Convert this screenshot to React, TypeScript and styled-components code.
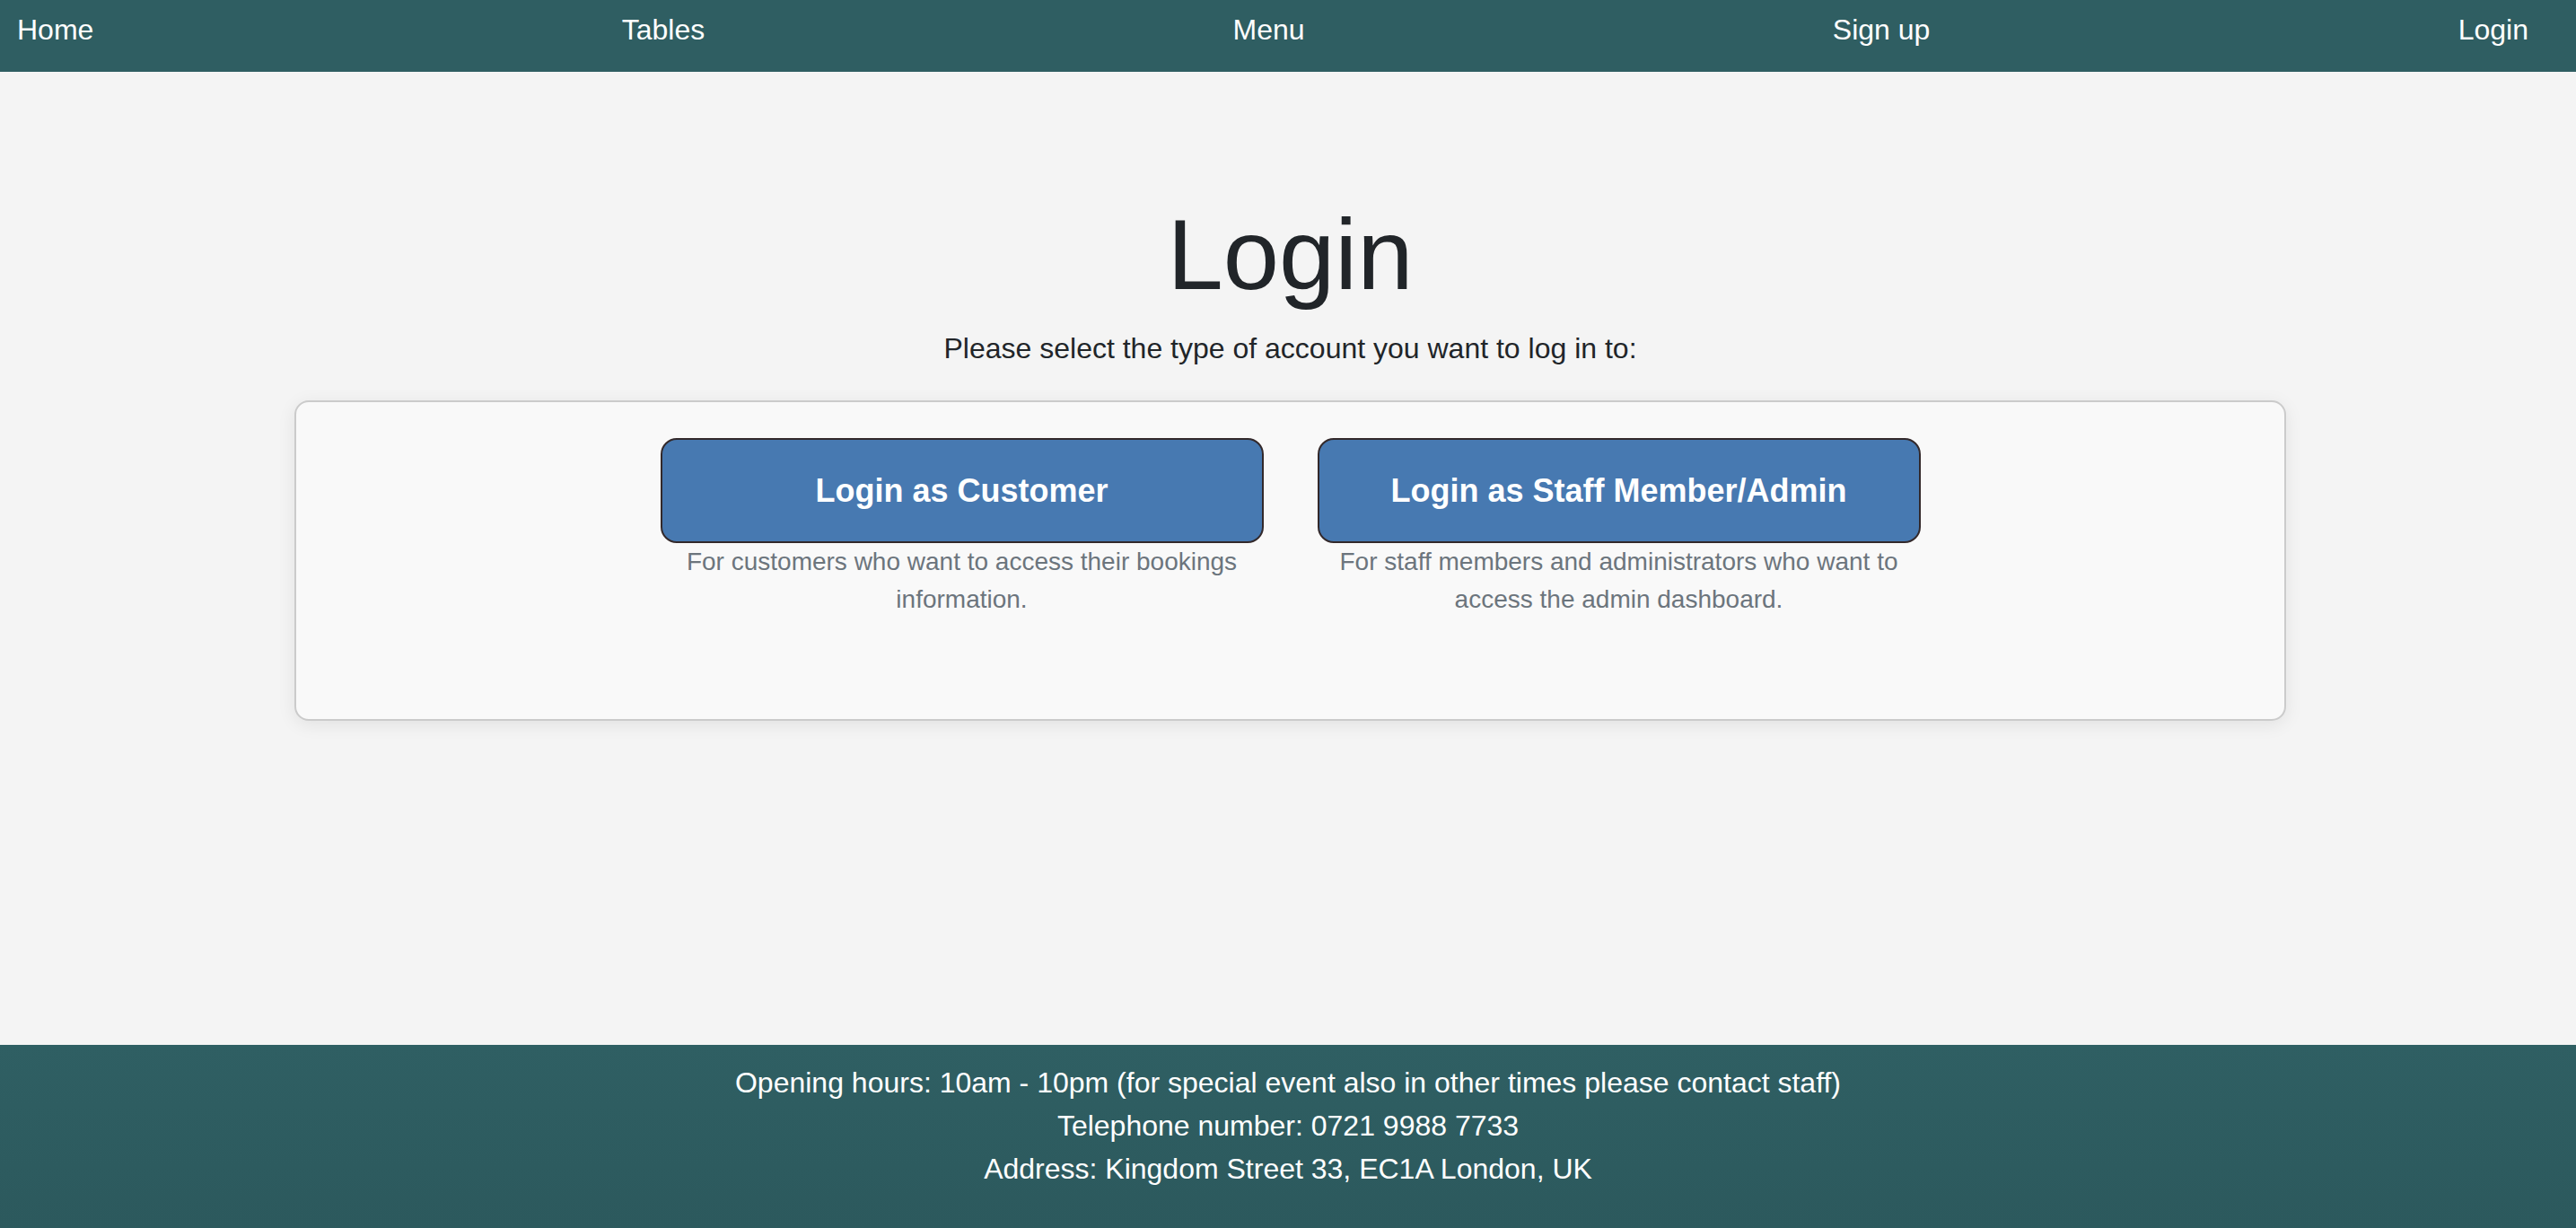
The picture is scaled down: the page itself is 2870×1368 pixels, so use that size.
import styled, { createGlobalStyle } from 'styled-components';

const GlobalStyle = createGlobalStyle`
  * {
    box-sizing: border-box;
  }
  body {
    margin: 0;
    font-family: 'Liberation Sans', Arial, Helvetica, sans-serif;
    background: #f4f4f4;
    color: #212529;
  }
`;

const Page = styled.div`
  display: flex;
  flex-direction: column;
  min-height: 100vh;
`;

const NavBar = styled.nav`
  display: flex;
  justify-content: space-between;
  align-items: flex-start;
  height: 80px;
  padding: 9px 53px 0 19px;
  background: #2f5e62;
`;

const NavLink = styled.a`
  color: #fff;
  font-size: 32px;
  line-height: 48px;
  text-decoration: none;
  cursor: pointer;
`;

const Main = styled.main`
  flex: 1;
  display: flex;
  flex-direction: column;
  align-items: center;
  padding: 137px 0 0 5px;
`;

const Title = styled.h1`
  margin: 0 0 13px;
  font-size: 112px;
  font-weight: 400;
  line-height: 1.2;
  color: #212529;
`;

const Lead = styled.p`
  margin: 0 0 34px;
  font-size: 32px;
  line-height: 48px;
  color: #212529;
`;

const Card = styled.section`
  width: 2219px;
  display: flex;
  justify-content: center;
  gap: 60px;
  padding: 40px 40px 112px;
  background: #f9f9f9;
  border: 2px solid #cbcbcb;
  border-radius: 16px;
  box-shadow: 0 4px 20px rgba(0, 0, 0, 0.08);
`;

const Option = styled.div`
  width: 672px;
  display: flex;
  flex-direction: column;
  align-items: center;
`;

const OptionButton = styled.button`
  width: 100%;
  height: 117px;
  background: #4779b1;
  color: #fff;
  border: 2px solid #33292b;
  border-radius: 18px;
  font-family: inherit;
  font-size: 36px;
  font-weight: 700;
  cursor: pointer;
`;

const Hint = styled.p`
  margin: 0;
  font-size: 28px;
  line-height: 42px;
  text-align: center;
  color: #6c757d;
`;

const Footer = styled.footer`
  padding: 18px 0 42px;
  background: linear-gradient(to bottom, #2f5f63, #2c595d);
  color: #fff;
  text-align: center;
`;

const FooterLine = styled.p`
  margin: 0;
  font-size: 32px;
  line-height: 48px;
`;

const NAV_ITEMS = ['Home', 'Tables', 'Menu', 'Sign up', 'Login'];

const OPTIONS = [
  {
    label: 'Login as Customer',
    hint: 'For customers who want to access their bookings information.',
  },
  {
    label: 'Login as Staff Member/Admin',
    hint: 'For staff members and administrators who want to access the admin dashboard.',
  },
];

export default function App() {
  return (
    <Page>
      <GlobalStyle />
      <NavBar>
        {NAV_ITEMS.map((item) => (
          <NavLink key={item}>{item}</NavLink>
        ))}
      </NavBar>

      <Main>
        <Title>Login</Title>
        <Lead>Please select the type of account you want to log in to:</Lead>
        <Card>
          {OPTIONS.map(({ label, hint }) => (
            <Option key={label}>
              <OptionButton type="button">{label}</OptionButton>
              <Hint>{hint}</Hint>
            </Option>
          ))}
        </Card>
      </Main>

      <Footer>
        <FooterLine>Opening hours: 10am - 10pm (for special event also in other times please contact staff)</FooterLine>
        <FooterLine>Telephone number: 0721 9988 7733</FooterLine>
        <FooterLine>Address: Kingdom Street 33, EC1A London, UK</FooterLine>
      </Footer>
    </Page>
  );
}
